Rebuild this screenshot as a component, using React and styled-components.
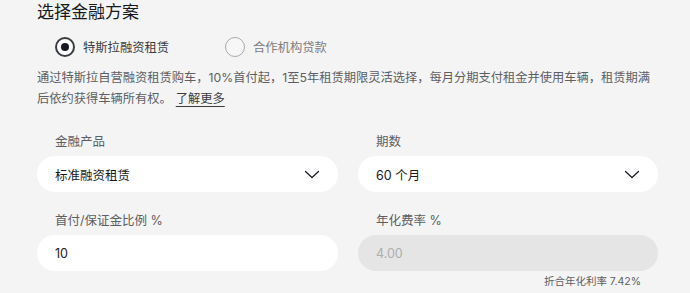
import React, { useState } from 'react'
import styled, { createGlobalStyle } from 'styled-components'

const GlobalStyle = createGlobalStyle`
  html, body {
    margin: 0;
    padding: 0;
    background: #f4f4f4;
  }
  body {
    font-family: Inter, "Noto Sans CJK SC", sans-serif;
    color: #171a20;
  }
`

const Page = styled.div`
  width: 621px;
  padding: 0 0 0 37px;
`

const Title = styled.h2`
  margin: 0;
  font-size: 17px;
  font-weight: 400;
  line-height: 24px;
  color: #171a20;
`

const RadioRow = styled.div`
  display: flex;
  padding-left: 18px;
  margin-top: 13px;
  height: 20px;
`

const RadioOption = styled.label`
  width: 170px;
  display: flex;
  align-items: center;
  gap: 8px;
  font-size: 12.3px;
  color: ${(p) => (p.checked ? '#393c41' : '#7d7d7d')};
  cursor: pointer;
`

const RadioCircle = styled.span`
  box-sizing: border-box;
  width: 20px;
  height: 20px;
  border-radius: 50%;
  border: ${(p) => (p.checked ? '2px solid #393c41' : '1.5px solid #a9a9a9')};
  display: flex;
  align-items: center;
  justify-content: center;
  background: ${(p) => (p.checked ? '#fff' : '#f7f7f7')};

  &::after {
    content: '';
    width: 8px;
    height: 8px;
    border-radius: 50%;
    background: #171a20;
    display: ${(p) => (p.checked ? 'block' : 'none')};
  }
`

const Description = styled.div`
  margin-top: 10px;
  font-size: 12.25px;
  line-height: 21px;
  color: #5c5e62;
`

const LearnMore = styled.a`
  color: #393c41;
  text-decoration: underline;
  text-underline-offset: 3px;
  margin-left: 4px;
`

const FieldGrid = styled.div`
  display: grid;
  grid-template-columns: 301px 300px;
  column-gap: 20px;
  row-gap: 20px;
  margin-top: 24px;
`

const Field = styled.div`
  display: flex;
  flex-direction: column;
`

const Label = styled.div`
  padding-left: 18px;
  font-size: 12.5px;
  line-height: 18px;
  color: #5c5e62;
  margin-bottom: 5px;
`

const Box = styled.div`
  box-sizing: border-box;
  height: 36px;
  border-radius: 18px;
  background: ${(p) => (p.disabled ? '#e5e5e5' : '#fff')};
  color: ${(p) => (p.disabled ? '#aeaeae' : '#171a20')};
  display: flex;
  align-items: center;
  justify-content: space-between;
  padding: 0 18px;
  font-size: 12.5px;
`

const Hint = styled.div`
  margin-top: 4px;
  padding-right: 17px;
  text-align: right;
  font-size: 10.5px;
  line-height: 14px;
  color: #5c5e62;
`

const Chevron = () => (
  <svg width="16" height="9" viewBox="0 0 16 9" fill="none">
    <path d="M1.5 1.5l6.5 6L14.5 1.5" stroke="#171a20" strokeWidth="1.2" strokeLinecap="round" strokeLinejoin="round" />
  </svg>
)

const App = () => {
  const [plan, setPlan] = useState('tesla')

  return (
    <Page>
      <GlobalStyle />
      <Title>选择金融方案</Title>
      <RadioRow>
        <RadioOption checked={plan === 'tesla'} onClick={() => setPlan('tesla')}>
          <RadioCircle checked={plan === 'tesla'} />
          特斯拉融资租赁
        </RadioOption>
        <RadioOption checked={plan === 'bank'} onClick={() => setPlan('bank')}>
          <RadioCircle checked={plan === 'bank'} />
          合作机构贷款
        </RadioOption>
      </RadioRow>
      <Description>
        通过特斯拉自营融资租赁购车，10%首付起，1至5年租赁期限灵活选择，每月分期支付租金并使用车辆，租赁期满后依约获得车辆所有权。
        <LearnMore>了解更多</LearnMore>
      </Description>
      <FieldGrid>
        <Field>
          <Label>金融产品</Label>
          <Box>
            标准融资租赁
            <Chevron />
          </Box>
        </Field>
        <Field>
          <Label>期数</Label>
          <Box>
            60 个月
            <Chevron />
          </Box>
        </Field>
        <Field>
          <Label>首付/保证金比例 %</Label>
          <Box>10</Box>
        </Field>
        <Field>
          <Label>年化费率 %</Label>
          <Box disabled>4.00</Box>
          <Hint>折合年化利率 7.42%</Hint>
        </Field>
      </FieldGrid>
    </Page>
  )
}

export default App
